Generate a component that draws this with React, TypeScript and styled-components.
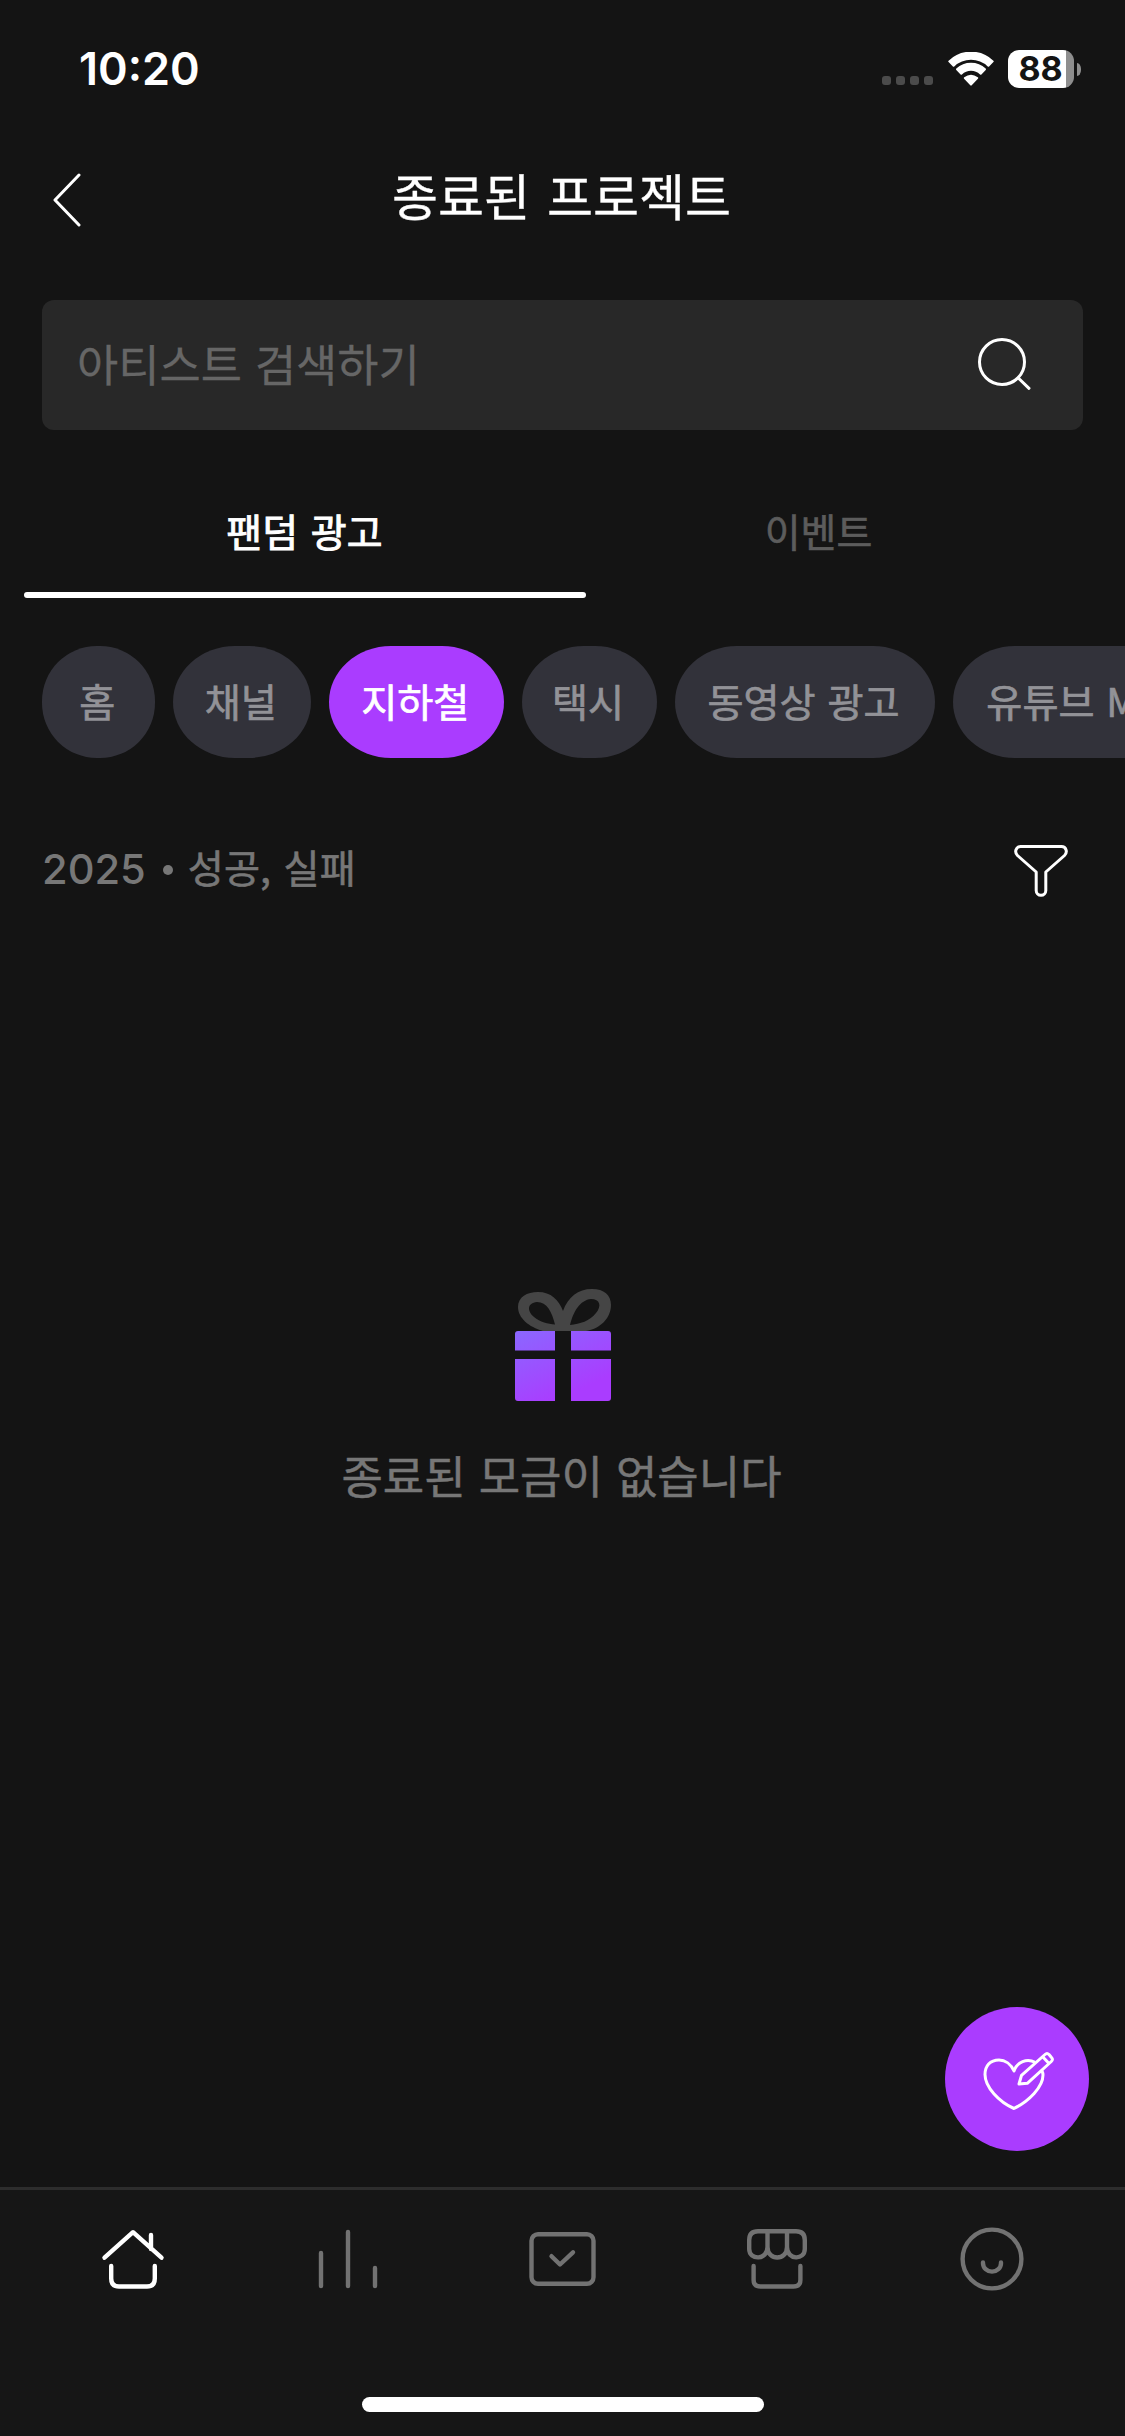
import React from "react";
import styled, { createGlobalStyle } from "styled-components";

const color = {
  screen: "#141414",
  bar: "#161616",
  field: "#282828",
  chip: "#32323a",
  accent: "#aa3cff",
  muted: "#777777",
  icon: "#727272",
};

const GlobalStyle = createGlobalStyle`
  * { box-sizing: border-box; }
  body { margin: 0; background: ${color.screen}; }
  button { border: 0; padding: 0; background: none; font: inherit; color: inherit; }
  svg { display: block; }
`;

const Screen = styled.div`
  position: relative;
  display: flex;
  flex-direction: column;
  width: 1125px;
  height: 2436px;
  overflow: hidden;
  background: ${color.screen};
  color: #fff;
  font-family: Inter, "Noto Sans CJK KR", sans-serif;
`;

const Hangul = styled.span<{ $gap?: number; $heft?: number }>`
  font-family: "Noto Sans CJK KR", sans-serif;
  font-weight: 400;
  white-space: nowrap;
  word-spacing: ${(p) => p.$gap ?? 4}px;
  -webkit-text-stroke: ${(p) => p.$heft ?? 0.3}px currentColor;
`;

const StatusBar = styled.div`
  display: flex;
  align-items: center;
  justify-content: space-between;
  height: 138px;
  padding: 0 44px 0 79px;
`;

const Clock = styled.time`
  font-size: 45px;
  font-weight: 600;
  line-height: 54px;
  letter-spacing: 0;
`;

const StatusIcons = styled.div`
  display: flex;
  align-items: center;
`;

const SignalDots = styled.div`
  display: flex;
  gap: 5px;
  margin: 23px 15px 0 0;
`;

const SignalDot = styled.i`
  width: 9px;
  height: 9px;
  border-radius: 3px;
  background: #4b4b4b;
`;

const Battery = styled.div`
  display: flex;
  align-items: center;
  justify-content: center;
  width: 66px;
  height: 38px;
  margin: 0 3px 0 14px;
  padding-right: 1px;
  border-radius: 11px;
  background: linear-gradient(90deg, #fff 58px, #8e8e8e 58px);
  color: ${color.screen};
  font-size: 34px;
  font-weight: 700;
  line-height: 36px;
  letter-spacing: -0.2px;
`;

const BatteryTip = styled.i`
  width: 4px;
  height: 13px;
  border-radius: 0 4px 4px 0 / 0 6px 6px 0;
  background: #8e8e8e;
`;

const Header = styled.header`
  display: grid;
  grid-template-columns: 120px 1fr 120px;
  align-items: center;
  height: 120px;
`;

const BackButton = styled.button`
  padding: 3px 0 0 51px;
`;

const Title = styled.h1`
  margin: 0;
  padding: 0 2px 5px 0;
  text-align: center;
  font-size: 50px;
  font-weight: 400;
  line-height: 72px;
`;

const SearchField = styled.div`
  display: flex;
  align-items: center;
  justify-content: space-between;
  height: 130px;
  margin: 42px 42px 0;
  padding: 0 50px 6px 35px;
  border-radius: 12px;
  background: ${color.field};
  color: #666;
  font-size: 44.8px;
`;

const Tabs = styled.nav`
  display: flex;
  height: 168px;
  padding: 34px 24px 0;
`;

const Tab = styled.button<{ $active?: boolean }>`
  display: flex;
  align-items: center;
  justify-content: center;
  width: ${(p) => (p.$active ? 562 : 466)}px;
  padding-top: 3px;
  padding-right: 1px;
  color: ${(p) => (p.$active ? "#fff" : "#5c5c5c")};
  font-size: 39px;
`;

const TabColumn = styled.div`
  display: flex;
  flex-direction: column;
  justify-content: space-between;
  & > button { height: 128px; }
`;

const TabUnderline = styled.i`
  height: 6px;
  border-radius: 3px;
  background: #fff;
`;

const Chips = styled.div`
  display: flex;
  gap: 18px;
  margin-top: 48px;
  padding-left: 42px;
  overflow: hidden;
`;

const Chip = styled.button<{ $active?: boolean; $width: number }>`
  display: flex;
  flex: none;
  align-items: center;
  justify-content: center;
  width: ${(p) => p.$width}px;
  height: 112px;
  padding: 0 2px 4px 0;
  border-radius: ${(p) => (p.$width < 120 ? "55px" : "62px / 56px")};
  background: ${(p) => (p.$active ? color.accent : color.chip)};
  color: ${(p) => (p.$active ? "#fff" : "#929297")};
  font-size: 39.2px;
`;

const FilterRow = styled.div`
  display: flex;
  align-items: center;
  justify-content: space-between;
  height: 80px;
  margin: 70px 56px 0 42px;
  color: ${color.muted};
  & > svg { margin-top: 5px; }
`;

const FilterSummary = styled.div`
  display: flex;
  align-items: baseline;
  font-size: 41.6px;
  font-weight: 500;
  line-height: 60px;
  white-space: pre;
  & > span { font-size: 39.2px; transform: translateY(-1px); }
`;

const Bullet = styled.i`
  align-self: center;
  width: 10px;
  height: 10px;
  margin: 4px 15px 0 17px;
  border-radius: 50%;
  background: ${color.muted};
`;

const Empty = styled.main`
  display: flex;
  flex: 1;
  flex-direction: column;
  align-items: center;
  padding-top: 380px;
`;

const EmptyText = styled.p`
  margin: 40px 2px 0 0;
  color: ${color.muted};
  font-size: 45px;
  line-height: 66px;
`;

const WriteButton = styled.button`
  position: absolute;
  right: 36px;
  bottom: 285px;
  width: 144px;
  height: 144px;
  border-radius: 50%;
  background: ${color.accent};
`;

const BottomBar = styled.footer`
  display: flex;
  flex-direction: column;
  align-items: center;
  justify-content: space-between;
  height: 249px;
  padding-bottom: 24px;
  border-top: 3px solid #2d2d2d;
  background: ${color.bar};
`;

const NavItems = styled.nav`
  display: grid;
  grid-template-columns: repeat(5, 1fr);
  width: 1074px;
  padding-top: 33px;
`;

const NavItem = styled.button<{ $active?: boolean }>`
  display: flex;
  justify-content: center;
  color: ${(p) => (p.$active ? "#fff" : color.icon)};
`;

const HomeIndicator = styled.i`
  width: 402px;
  height: 15px;
  border-radius: 8px;
  background: #fff;
`;

const WifiIcon = () => (
  <svg width="46" height="34" viewBox="0 0 46 34" fill="#fff" stroke="#fff" strokeWidth="2" strokeLinejoin="round">
    <path d="M1.3 9.4A31.2 31.2 0 0 1 44.7 9.4L40.4 13.8A25.2 25.2 0 0 0 5.6 13.8Z" />
    <path d="M9 17.3A20.2 20.2 0 0 1 37 17.3L32.7 21.7A14.2 14.2 0 0 0 13.3 21.7Z" />
    <path d="M16.8 26.1Q23 21.4 29.2 26.1L23 32.6Z" />
  </svg>
);

const BackIcon = () => (
  <svg width="31" height="54" viewBox="0 0 31 54" fill="none" stroke="#fff" strokeWidth="3" strokeLinecap="round" strokeLinejoin="round">
    <path d="M28 2L4 27L28 52" />
  </svg>
);

const SearchIcon = () => (
  <svg width="56" height="56" viewBox="0 0 56 56" fill="none" stroke="#fff" strokeWidth="3" strokeLinecap="round">
    <circle cx="25" cy="28" r="22.5" />
    <path d="M41.3 44L52 54.3" />
  </svg>
);

const FunnelIcon = () => (
  <svg width="56" height="54" viewBox="0 0 56 54" fill="none" stroke="#fff" strokeWidth="3" strokeLinejoin="round">
    <path d="M7.5 2.5H48.5C53 2.5 55 8 51.5 11.5L32.8 28V46.5A4.8 4.8 0 0 1 23.2 46.5V28L4.5 11.5C1 8 3 2.5 7.5 2.5Z" />
  </svg>
);

const GiftIcon = () => (
  <svg width="98" height="114" viewBox="0 0 98 114">
    <defs>
      <linearGradient id="gift" x1="10" y1="40" x2="44" y2="112" gradientUnits="userSpaceOnUse">
        <stop offset="0" stopColor="#8b67ff" />
        <stop offset="1" stopColor="#aa3cff" />
      </linearGradient>
    </defs>
    <path
      fill="#454545"
      fillRule="evenodd"
      d="M29 43C15 39 4 30 4 19C4 9 13 4 24 4C37 4 45 12 49 23C54 9 64 1 78 1C90 1 97 7 97 17C97 30 86 41 72 43ZM41 36.5C38 24 33 14 23 14C13 15 13 23 20 29C26 34 34 36 41 36.5ZM56 37C59 24 66 12 77 11C86 11 88 18 82 25C76 33 66 36 56 37Z"
    />
    <path
      fill="url(#gift)"
      d="M4 43H41V62.5H1V46Q1 43 4 43ZM57 43H94Q97 43 97 46V62.5H57ZM1 71H41V113H4Q1 113 1 110ZM57 71H97V110Q97 113 94 113H57Z"
    />
  </svg>
);

const HeartPencilIcon = () => (
  <svg width="144" height="144" viewBox="0 0 144 144" fill="none" stroke="#fff" strokeWidth="3" strokeLinejoin="round">
    <path d="M90 55.3C82 51 72 55 69 64C66 57 60 53 54 53C45 53 40 59 40 67.5C40 80 54 95 69 101.5C84 94 98 80 98 68Q98 66 97 64" />
    <path d="M74 77L76.5 68.3L100 47.5Q102 45.5 104 47.5L106.5 50.5Q108.5 52.5 106.3 54.5L82.3 76.3Z" />
    <path d="M97.7 49.8L104 56.5" />
  </svg>
);

const NavIcon = ({ children }: { children: React.ReactNode }) => (
  <svg width="72" height="72" viewBox="0 0 72 72" fill="none" stroke="currentColor" strokeWidth="4.4" strokeLinecap="round" strokeLinejoin="round">
    {children}
  </svg>
);

const chips = [
  { label: "홈", width: 112.5 },
  { label: "채널", width: 138.5 },
  { label: "지하철", width: 174.5, active: true },
  { label: "택시", width: 135 },
  { label: "동영상 광고", width: 260 },
  { label: "유튜브 MV", width: 244 },
];

const navIcons = [
  <>
    <path d="M7.5 34.7L36 9.2L64.5 34.7M54 12V26" />
    <path d="M14.2 43V55.5Q14.2 63.5 22 63.5H50Q57.8 63.5 57.8 55.5V43" />
  </>,
  <path d="M9 30V63M36 9V63M63 45V63" />,
  <>
    <rect x="5.5" y="11.2" width="62" height="49.6" rx="6.5" />
    <path d="M25.5 33.2L34 41.5L47 29.3" />
  </>,
  <>
    <path d="M17 8.2H55Q63.8 8.2 63.8 17V26C63.8 37.5 46 37.5 46 24V8.2M46 24C46 38 26.5 38 26.5 24V8.2M26.5 24C26.5 37.5 8.2 37.5 8.2 26V17Q8.2 8.2 17 8.2" />
    <path d="M12.6 43V57Q12.6 63.5 19.5 63.5H52.5Q59.4 63.5 59.4 57V43" />
  </>,
  <>
    <circle cx="36" cy="36" r="29.4" />
    <path d="M27 39.5V40.2A9 8.4 0 0 0 45 40.2V39.5" />
  </>,
];

export default function App() {
  return (
    <Screen>
      <GlobalStyle />
      <StatusBar>
        <Clock>10:20</Clock>
        <StatusIcons>
          <SignalDots>
            {[0, 1, 2, 3].map((dot) => (
              <SignalDot key={dot} />
            ))}
          </SignalDots>
          <WifiIcon />
          <Battery>88</Battery>
          <BatteryTip />
        </StatusIcons>
      </StatusBar>

      <Header>
        <BackButton aria-label="뒤로">
          <BackIcon />
        </BackButton>
        <Title>
          <Hangul $gap={6}>종료된 프로젝트</Hangul>
        </Title>
      </Header>

      <SearchField>
        <Hangul $gap={3}>아티스트 검색하기</Hangul>
        <SearchIcon />
      </SearchField>

      <Tabs>
        <TabColumn>
          <Tab $active>
            <Hangul $heft={0.9}>팬덤 광고</Hangul>
          </Tab>
          <TabUnderline />
        </TabColumn>
        <TabColumn>
          <Tab>
            <Hangul $heft={0.6}>이벤트</Hangul>
          </Tab>
        </TabColumn>
      </Tabs>

      <Chips>
        {chips.map((chip) => (
          <Chip key={chip.label} $active={chip.active} $width={chip.width}>
            <Hangul $gap={3} $heft={0.7}>{chip.label}</Hangul>
          </Chip>
        ))}
      </Chips>

      <FilterRow>
        <FilterSummary>
          2025
          <Bullet />
          <Hangul $heft={0.6}>성공, 실패</Hangul>
        </FilterSummary>
        <FunnelIcon />
      </FilterRow>

      <Empty>
        <GiftIcon />
        <EmptyText>
          <Hangul $gap={3} $heft={0.5}>종료된 모금이 없습니다</Hangul>
        </EmptyText>
      </Empty>

      <WriteButton aria-label="글쓰기">
        <HeartPencilIcon />
      </WriteButton>

      <BottomBar>
        <NavItems>
          {navIcons.map((icon, index) => (
            <NavItem key={index} $active={index === 0}>
              <NavIcon>{icon}</NavIcon>
            </NavItem>
          ))}
        </NavItems>
        <HomeIndicator />
      </BottomBar>
    </Screen>
  );
}
